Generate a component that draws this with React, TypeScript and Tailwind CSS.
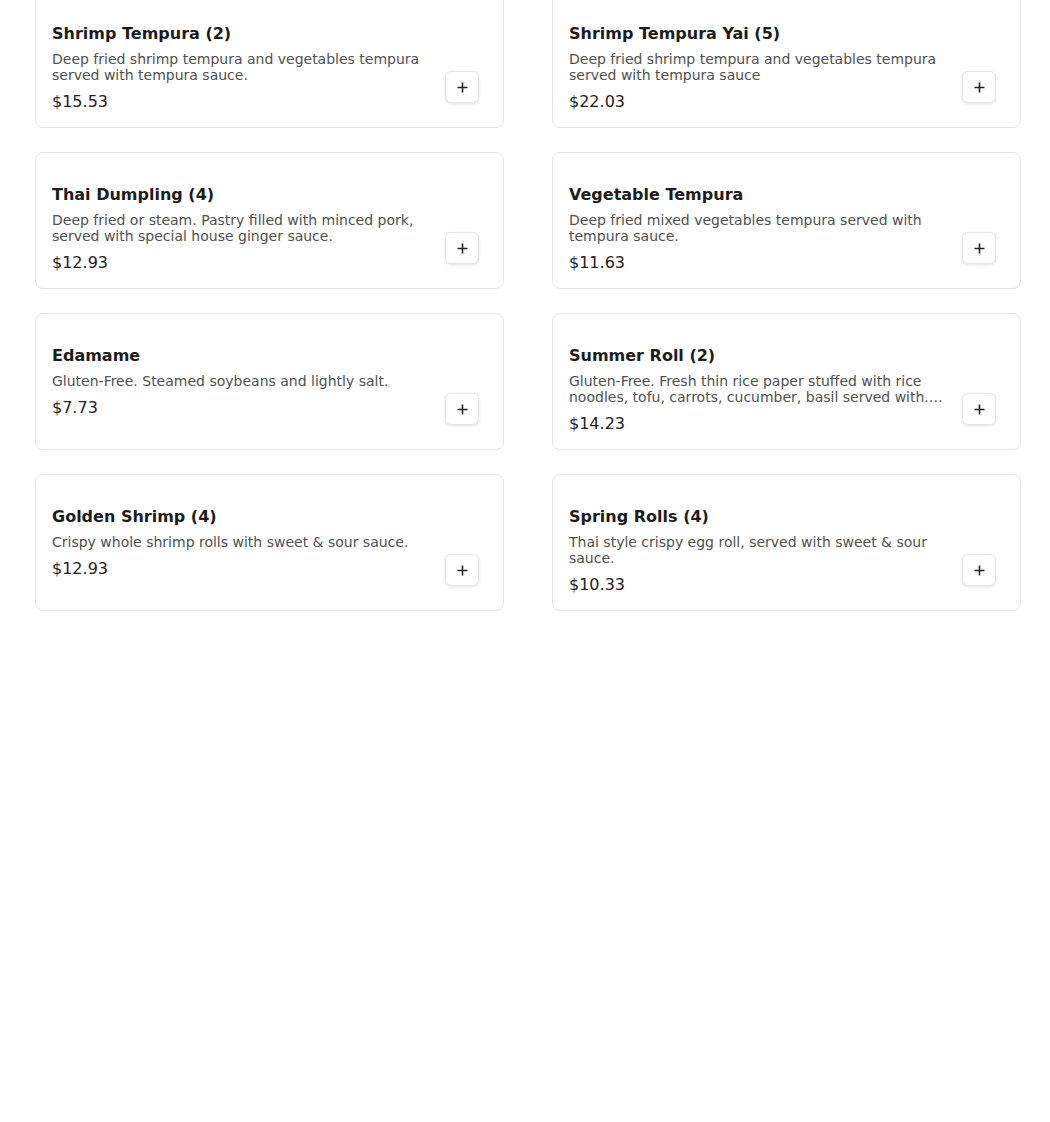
import React from "react";

type Item = { name: string; desc: string; price: string };

const items: Item[] = [
  { name: "Shrimp Tempura (2)", desc: "Deep fried shrimp tempura and vegetables tempura served with tempura sauce.", price: "$15.53" },
  { name: "Shrimp Tempura Yai (5)", desc: "Deep fried shrimp tempura and vegetables tempura served with tempura sauce", price: "$22.03" },
  { name: "Thai Dumpling (4)", desc: "Deep fried or steam. Pastry filled with minced pork, served with special house ginger sauce.", price: "$12.93" },
  { name: "Vegetable Tempura", desc: "Deep fried mixed vegetables tempura served with tempura sauce.", price: "$11.63" },
  { name: "Edamame", desc: "Gluten-Free. Steamed soybeans and lightly salt.", price: "$7.73" },
  { name: "Summer Roll (2)", desc: "Gluten-Free. Fresh thin rice paper stuffed with rice noodles, tofu, carrots, cucumber, basil served with.\u2026", price: "$14.23" },
  { name: "Golden Shrimp (4)", desc: "Crispy whole shrimp rolls with sweet & sour sauce.", price: "$12.93" },
  { name: "Spring Rolls (4)", desc: "Thai style crispy egg roll, served with sweet & sour sauce.", price: "$10.33" },
];

function PlusIcon() {
  return (
    <svg width="11" height="11" viewBox="0 0 11 11" fill="none">
      <path d="M5.5 0.5v10M0.5 5.5h10" stroke="#222" strokeWidth="1.6" />
    </svg>
  );
}

function Card({ item }: { item: Item }) {
  return (
    <div className="flex h-[137px] gap-4 rounded-lg border border-[#e4e4e4] bg-white px-4">
      <div className="min-w-0 flex-1 pt-[30px]">
        <div className="text-base font-bold leading-6 text-[#1c1c1c]">{item.name}</div>
        <div className="mt-[5px] line-clamp-2 text-sm leading-[16px] text-[#505050]">{item.desc}</div>
        <div className="mt-[7px] text-base leading-6 text-[#222]">{item.price}</div>
      </div>
      <button className="mr-[8px] mt-[79px] flex h-[32px] w-[34px] shrink-0 items-center justify-center rounded-md border border-[#e6e6e6] bg-white shadow-[0_1px_3px_rgba(0,0,0,0.12)]">
        <PlusIcon />
      </button>
    </div>
  );
}

export default function App() {
  return (
    <div className="min-h-[1122px] bg-white font-['DejaVu_Sans',sans-serif]">
      <div className="-mt-[9px] grid grid-cols-2 gap-x-[48px] gap-y-[24px] pl-[35px] pr-[29px]">
        {items.map((it) => (
          <Card key={it.name} item={it} />
        ))}
      </div>
    </div>
  );
}
